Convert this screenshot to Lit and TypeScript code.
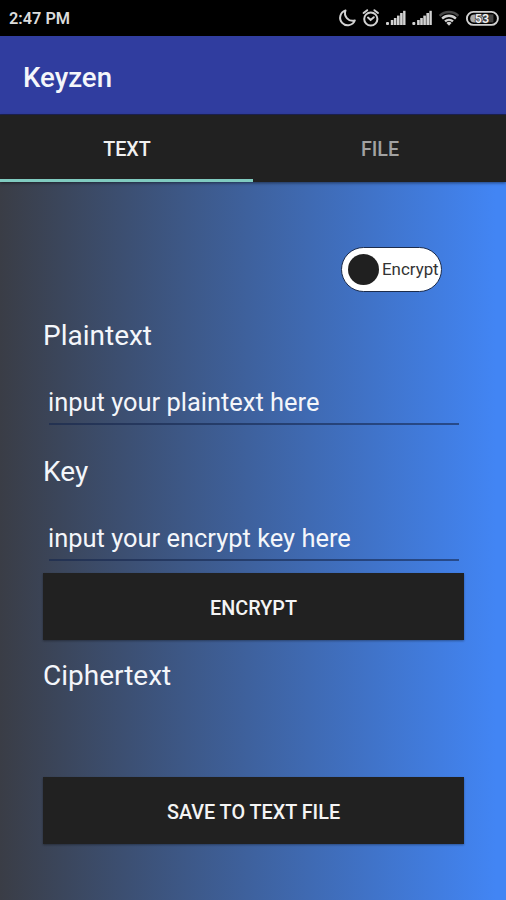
import { LitElement, html, css, svg } from "lit";
import { customElement, state } from "lit/decorators.js";

const signalBars = svg`
  <rect x="0" y="12" width="3" height="3" rx="1"/>
  <rect x="4.8" y="10" width="2.6" height="5"/>
  <rect x="7.9" y="8" width="2.6" height="7"/>
  <rect x="11" y="5.6" width="2.6" height="9.4"/>
  <rect x="14.1" y="3" width="2.6" height="12"/>
  <rect x="17.1" y="0.8" width="2.4" height="14.2"/>`;

@customElement("status-bar")
export class StatusBar extends LitElement {
  static styles = css`
    :host {
      display: flex;
      align-items: center;
      height: 36px;
      padding: 0 7px 0 9px;
      background: #000;
      color: #dcdcdc;
    }
    .time {
      flex: 1;
      font-size: 16.3px;
      font-weight: 600;
      line-height: 20px;
      padding-top: 2px;
    }
    .icons {
      display: flex;
      align-items: center;
    }
    svg {
      display: block;
    }
  `;

  render() {
    return html`
      <div class="time">2:47 PM</div>
      <div class="icons">
        <svg width="167" height="36" viewBox="332 0 167 36" fill="#d2d2d2">
          <path d="M345.5 10.4A7.6 7.6 0 1 0 354.8 20.5 7.7 7.7 0 0 1 345.5 10.4Z"
            fill="none" stroke="#d2d2d2" stroke-width="2" stroke-linejoin="round"/>
          <g fill="none" stroke="#d2d2d2" stroke-width="2" stroke-linecap="round">
            <circle cx="370.8" cy="19" r="6.6"/>
            <path d="M363.6 13l3.6-2.8M378 13l-3.6-2.8M368 17.6l2.6 2.4 3.2-2.8"/>
          </g>
          <g transform="translate(386 10)">${signalBars}</g>
          <g transform="translate(412.3 10)">${signalBars}</g>
          <g fill="none" stroke-width="2.3">
            <path d="M439.6 15.8a13.5 13.5 0 0 1 18.8 0" stroke="#484848"/>
            <path d="M442.1 18.6a9.8 9.8 0 0 1 13.8 0" stroke="#d2d2d2"/>
            <path d="M445 21.4a5.8 5.8 0 0 1 8 0" stroke="#d2d2d2"/>
          </g>
          <path d="M446.4 23a3.8 3.8 0 0 1 5.2 0L449 25.8Z"/>
          <rect x="466.9" y="11.9" width="31" height="13" rx="6.5" fill="none" stroke="#d2d2d2" stroke-width="1.9"/>
          <path d="M474.2 14.4H483V22.4H474.2a4 4 0 0 1 0-8Z" fill="#aaa"/>
          <path d="M483 14.4h10.4v8H483Z" fill="#444"/>
          <text x="482" y="22.7" text-anchor="middle" font-family="Roboto, sans-serif" font-size="12.5" font-weight="700"
            fill="#eee" stroke="#222" stroke-width="1.2" paint-order="stroke">53</text>
        </svg>
      </div>
    `;
  }
}

@customElement("app-root")
export class AppRoot extends LitElement {
  @state() private tab = 0;

  static styles = css`
    :host {
      display: flex;
      flex-direction: column;
      width: 506px;
      height: 900px;
      overflow: hidden;
      font-family: Roboto, sans-serif;
      color: #f4f6fa;
    }
    .appbar {
      flex: none;
      box-sizing: border-box;
      height: 79px;
      padding: 25px 0 0 23px;
      background: #303d9f;
      border-bottom: 1px solid #1d2355;
      font-size: 27.6px;
      font-weight: 500;
      line-height: 34px;
    }
    .tabs {
      flex: none;
      display: flex;
      height: 67px;
      background: #212121;
      z-index: 1;
      box-shadow: 0 1px 3px rgba(0, 0, 0, 0.5);
    }
    .tab {
      flex: 1;
      box-sizing: border-box;
      padding: 5px 0 0 1px;
      border: 0 solid transparent;
      border-bottom-width: 3px;
      background: none;
      color: #a2a2a2;
      font: 500 19.7px/24px Roboto, sans-serif;
    }
    .tab.active {
      color: #f0f0f0;
      border-bottom-color: #80cbc0;
    }
    .page {
      flex: 1;
      display: flex;
      flex-direction: column;
      padding: 65px 42px 0 43px;
      background: linear-gradient(90deg, #3a3d46, #4285f4 98%);
    }
    .switch {
      align-self: flex-end;
      box-sizing: border-box;
      display: flex;
      align-items: center;
      gap: 3px;
      width: 101px;
      height: 45px;
      margin-right: 22px;
      padding: 0 0 1px 6px;
      border: 1px solid #1c2c4c;
      border-radius: 23px;
      background: #fff;
      color: #333;
      font-size: 16.9px;
      white-space: nowrap;
    }
    .knob {
      flex: none;
      width: 31px;
      height: 31px;
      border-radius: 50%;
      background: #202020;
    }
    .label {
      height: 34px;
      font-size: 28px;
      line-height: 34px;
    }
    .label.first {
      margin-top: 27px;
    }
    .field {
      box-sizing: border-box;
      height: 72px;
      margin: 0 5px 0 6px;
      padding-top: 34px;
      border-bottom: 2px solid rgba(22, 38, 76, 0.6);
      font-size: 25.45px;
      line-height: 30px;
      text-indent: -1px;
    }
    .label.key {
      margin-top: 30px;
    }
    .button {
      flex: none;
      height: 67px;
      padding: 4px 0 0;
      border: 0;
      background: #212121;
      color: #f4f4f4;
      font: 500 19.8px/24px Roboto, sans-serif;
      box-shadow: 0 1px 2px rgba(0, 0, 0, 0.35);
    }
    .encrypt {
      margin-top: 12px;
    }
    .cipher {
      margin-top: 19px;
    }
    .save {
      margin-top: 84px;
    }
  `;

  render() {
    return html`
      <status-bar></status-bar>
      <div class="appbar">Keyzen</div>
      <div class="tabs">
        ${["TEXT", "FILE"].map(
          (name, i) => html`<button class="tab ${this.tab === i ? "active" : ""}"
            @click=${() => (this.tab = i)}>${name}</button>`
        )}
      </div>
      <div class="page">
        <div class="switch"><span class="knob"></span><span>Encrypt</span></div>
        <div class="label first">Plaintext</div>
        <div class="field">input your plaintext here</div>
        <div class="label key">Key</div>
        <div class="field">input your encrypt key here</div>
        <button class="button encrypt">ENCRYPT</button>
        <div class="label cipher">Ciphertext</div>
        <button class="button save">SAVE TO TEXT FILE</button>
      </div>
    `;
  }
}
